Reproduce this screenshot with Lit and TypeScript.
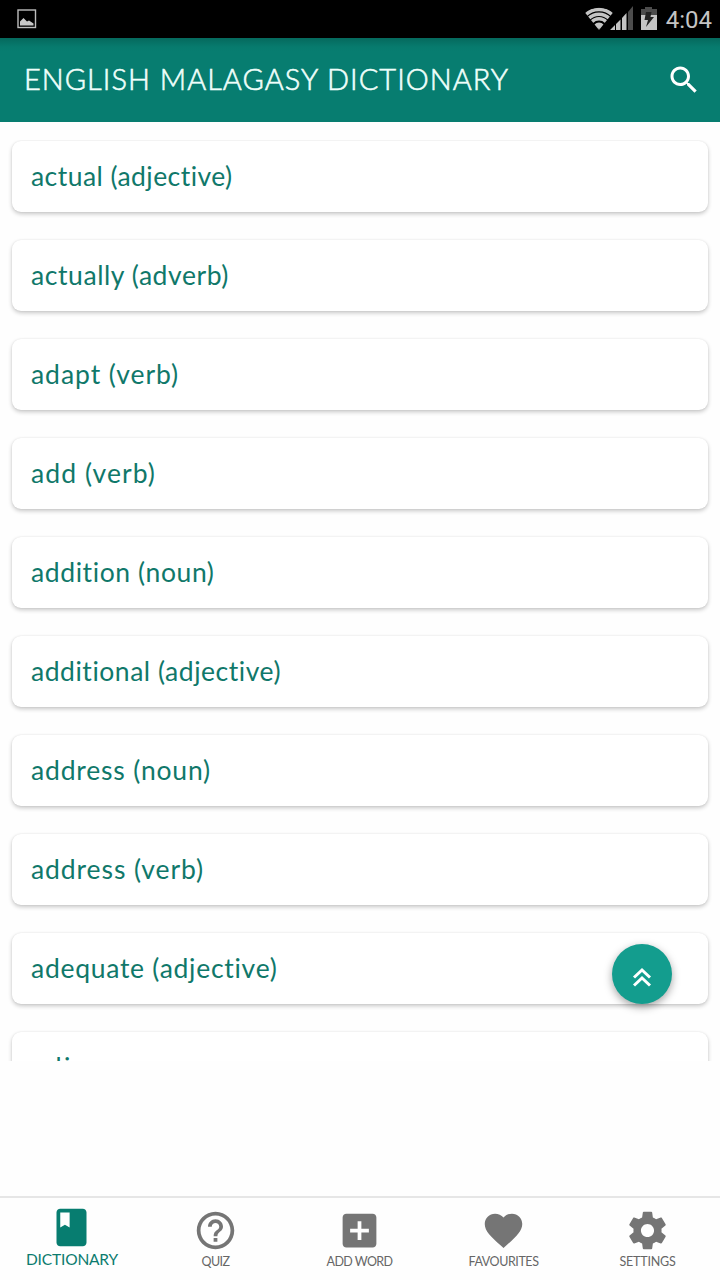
import { LitElement, html, css, svg } from "lit";
import { customElement, property } from "lit/decorators.js";

const WORDS: [string, number][] = [
  ["actual (adjective)", 201],
  ["actually (adverb)", 197],
  ["adapt (verb)", 147],
  ["add (verb)", 124],
  ["addition (noun)", 183],
  ["additional (adjective)", 250],
  ["address (noun)", 179],
  ["address (verb)", 172],
  ["adequate (adjective)", 246],
  ["adj", 41],
];

/** A line of text tracked so that it spans the given width. */
@customElement("fit-text")
class FitText extends LitElement {
  static styles = css`
    :host { display: inline-block; white-space: nowrap; }
    span { display: inline-block; }
  `;
  @property() text = "";
  @property({ type: Number }) width = 0;

  firstUpdated() {
    const el = this.renderRoot.querySelector("span") as HTMLElement;
    const fit = () => {
      el.style.letterSpacing = "0px";
      const natural = el.getBoundingClientRect().width;
      el.style.letterSpacing = (this.width - natural) / this.text.length + "px";
    };
    fit();
    document.fonts?.ready.then(fit);
  }
  render() {
    return html`<span>${this.text}</span>`;
  }
}

const icons = {
  book: svg`<path fill-rule="evenodd" d="M18 2H6c-1.100 0-2 .9-2 2v16c0 1.100.9 2 2 2h12c1.100 0 2-.9 2-2V4c0-1.100-.9-2-2-2zM6 4h5v8l-2.500-1.500L6 12V4z"/>`,
  help: svg`<path d="M11 18h2v-2h-2v2zm1-16C6.480 2 2 6.480 2 12s4.480 10 10 10 10-4.480 10-10S17.520 2 12 2zm0 18c-4.410 0-8-3.590-8-8s3.590-8 8-8 8 3.590 8 8-3.590 8-8 8zm0-14c-2.210 0-4 1.790-4 4h2c0-1.100.9-2 2-2s2 .9 2 2c0 2-3 1.750-3 5h2c0-2.250 3-2.500 3-5 0-2.210-1.790-4-4-4z"/>`,
  add: svg`<path d="M19 3H5c-1.110 0-2 .9-2 2v14c0 1.100.89 2 2 2h14c1.100 0 2-.9 2-2V5c0-1.100-.9-2-2-2zm-2 10h-4v4h-2v-4H7v-2h4V7h2v4h4v2z"/>`,
  heart: svg`<path d="M12 21.350l-1.450-1.320C5.400 15.360 2 12.280 2 8.500 2 5.420 4.420 3 7.500 3c1.740 0 3.410.81 4.500 2.090C13.090 3.810 14.760 3 16.500 3 19.580 3 22 5.420 22 8.500c0 3.780-3.400 6.860-8.550 11.540L12 21.350z"/>`,
  gear: svg`<path d="M19.430 12.980c.04-.32.07-.64.07-.98s-.03-.66-.07-.98l2.110-1.650c.19-.15.24-.42.12-.64l-2-3.460c-.12-.22-.39-.3-.61-.22l-2.490 1c-.52-.4-1.080-.73-1.690-.98l-.38-2.650C14.460 2.180 14.250 2 14 2h-4c-.25 0-.46.18-.49.42l-.38 2.650c-.61.25-1.170.59-1.690.98l-2.490-1c-.23-.09-.49 0-.61.22l-2 3.460c-.13.22-.07.49.12.64l2.110 1.650c-.04.32-.07.65-.07.98s.03.66.07.98l-2.110 1.650c-.19.15-.24.42-.12.64l2 3.460c.12.22.39.3.61.22l2.490-1c.52.4 1.080.73 1.690.98l.38 2.650c.03.24.24.42.49.42h4c.25 0 .46-.18.49-.42l.38-2.650c.61-.25 1.170-.59 1.690-.98l2.490 1c.23.09.49 0 .61-.22l2-3.460c.12-.22.07-.49-.12-.64l-2.110-1.650zM12 15.500c-1.930 0-3.500-1.570-3.500-3.500s1.570-3.500 3.500-3.500 3.500 1.570 3.500 3.500-1.570 3.500-3.500 3.500z"/>`,
};

const TABS = [
  { label: "DICTIONARY", icon: icons.book, width: 92, active: true },
  { label: "QUIZ", icon: icons.help, width: 28 },
  { label: "ADD WORD", icon: icons.add, width: 66 },
  { label: "FAVOURITES", icon: icons.heart, width: 70 },
  { label: "SETTINGS", icon: icons.gear, width: 56 },
];

@customElement("app-root")
class AppRoot extends LitElement {
  static styles = css`
    :host {
      display: flex;
      flex-direction: column;
      width: 720px;
      height: 1280px;
      overflow: hidden;
      position: relative;
      background: #fefefe;
      font-family: Lato, "Open Sans", sans-serif;
    }
    svg { display: block; }
    .status {
      height: 38px;
      flex: none;
      background: #000;
      display: flex;
      align-items: center;
      box-sizing: border-box;
      padding: 0 8px 0 17px;
    }
    .status .icons { margin-left: auto; }
    .clock {
      font: 24px/38px Roboto, sans-serif;
      color: #c4c4c4;
      padding: 1px 0 0 8px;
      height: 38px;
      box-sizing: border-box;
    }
    .bar {
      height: 84px;
      flex: none;
      box-sizing: border-box;
      padding: 0 18px 1px 24px;
      display: flex;
      align-items: center;
      justify-content: space-between;
      color: #effffb;
      font-size: 29px;
      font-weight: 300;
      -webkit-text-stroke: 0.6px #effffb;
      background: linear-gradient(#05695d, #077b6e 9px, #077d70 14px);
    }
    .bar fit-text { padding-bottom: 2px; }
    .list {
      height: 921px;
      flex: none;
      margin-top: 18px;
      overflow: hidden;
      padding: 1px 12px 0;
      box-sizing: border-box;
      display: flex;
      flex-direction: column;
      gap: 28px;
    }
    .card {
      height: 71px;
      flex: none;
      border-radius: 9px;
      background: #fff;
      box-shadow: 0 2px 4px rgba(0, 0, 0, 0.22), 0 0 2px rgba(0, 0, 0, 0.07);
      box-sizing: border-box;
      padding: 0 19px;
      font-size: 26.500px;
      line-height: 70px;
      color: #10786a;
    }
    .fab {
      position: absolute;
      left: 612px;
      top: 944px;
      width: 60px;
      height: 60px;
      border-radius: 50%;
      background: #139d8e;
      box-shadow: 0 3px 8px rgba(0, 0, 0, 0.36);
    }
    .nav {
      margin-top: auto;
      height: 84px;
      flex: none;
      box-sizing: border-box;
      border-top: 2px solid #e6e6e6;
      display: grid;
      grid-template-columns: repeat(5, 1fr);
    }
    .tab {
      display: flex;
      flex-direction: column;
      align-items: center;
      padding-top: 10px;
      font-size: 12.500px;
      line-height: 16px;
      color: #666;
      fill: #757575;
    }
    .tab svg { width: 45px; height: 45px; margin-right: 1px; }
    .tab .label { height: 16px; }
    .tab:not(.active) .label { padding-right: 1px; padding-top: 1px; }
    .tab.active { color: #0b7b6e; fill: #077d70; padding-top: 7px; font-size: 15.500px; }
    .tab.active .label { margin-top: 1px; }
  `;

  render() {
    return html`
      <div class="status">
        <svg width="20" height="20" viewBox="0 0 20 20">
          <rect x="1" y="1" width="17.500" height="17.500" fill="none" stroke="#bdbdbd" stroke-width="1.400" />
          <path d="M3 16.500v-4l3.500-3.500 3.500 3.500 2-1 4.500 3v2z" fill="#c8c8c8" />
        </svg>
        <svg class="icons" width="74" height="38" viewBox="584 0 74 38">
          <defs><clipPath id="fan"><path d="M599 30L584.500 12Q599 3 613.500 12z" /></clipPath></defs>
          <g clip-path="url(#fan)" fill="none" stroke="#c4c4c4" stroke-width="3.500">
            <circle cx="599" cy="29" r="19.500" /><circle cx="599" cy="29" r="14.800" />
            <circle cx="599" cy="29" r="10.200" /><circle cx="599" cy="29" r="3" stroke-width="7" />
          </g>
          <path d="M610 30l5-5v5zM616 24l4.500-4.500V30H616zM622 18l4.500-5v17H622z" fill="#c4c4c4" />
          <path d="M628 12l5-6v24h-5z" fill="#4c4c4c" />
          <path d="M641 9h4V7h7v2h5v6h-16z" fill="#4c4c4c" />
          <path d="M641 15h16v15h-16z" fill="#c4c4c4" />
          <path d="M646 12h5.500l-1 5h3.500l-8 10 2-7h-3.500z" fill="#222" />
        </svg>
        <div class="clock">4:04</div>
      </div>
      <div class="bar">
        <fit-text text="ENGLISH MALAGASY DICTIONARY" width="485"></fit-text>
        <svg width="36" height="36" viewBox="0 0 24 24" fill="#fff">
          <path d="M15.500 14h-.79l-.28-.27C15.410 12.590 16 11.110 16 9.500 16 5.910 13.090 3 9.500 3S3 5.910 3 9.500 5.910 16 9.500 16c1.610 0 3.090-.59 4.230-1.570l.27.28v.79l5 4.990L20.490 19l-4.990-5zm-6 0C7.010 14 5 11.990 5 9.500S7.010 5 9.500 5 14 7.010 14 9.500 11.990 14 9.500 14z" />
        </svg>
      </div>
      <div class="list">
        ${WORDS.map(([word, width]) => html`<div class="card"><fit-text .text=${word} .width=${width + 1}></fit-text></div>`)}
      </div>
      <div class="fab">
        <svg width="60" height="60" viewBox="0 0 60 60" fill="none" stroke="#fff" stroke-width="3">
          <path d="M22 33.500l8-7.500 8 7.500M22 41.500l8-7.500 8 7.500" />
        </svg>
      </div>
      <div class="nav">
        ${TABS.map((t) => html`<div class="tab ${t.active ? "active" : ""}">
          <svg viewBox="0 0 24 24">${t.icon}</svg>
          <fit-text class="label" .text=${t.label} .width=${t.width}></fit-text>
        </div>`)}
      </div>
    `;
  }
}
